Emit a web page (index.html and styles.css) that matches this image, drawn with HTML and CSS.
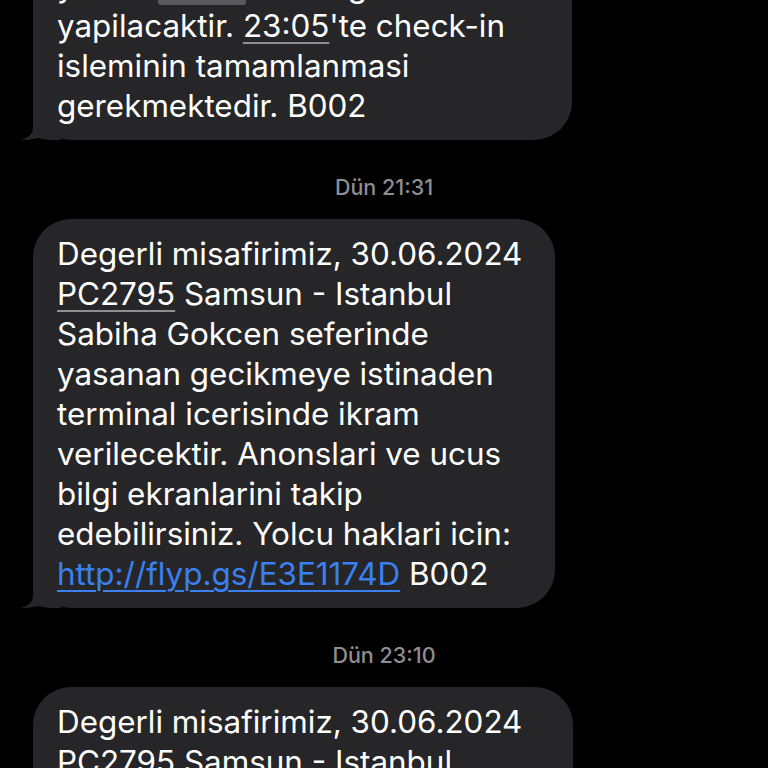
FILE: index.html
```html
<!DOCTYPE html>
<html lang="tr">
<head>
<meta charset="utf-8">
<title>Mesajlar</title>
<link rel="stylesheet" href="styles.css">
</head>
<body>
<div class="thread">
  <div class="msg w1">
    <div class="line">yerine <span class="hl">00:00</span> kalkis gate</div>
    <div class="line">yapilacaktir. <span class="dd">23:05</span>'te check-in</div>
    <div class="line">isleminin tamamlanmasi</div>
    <div class="line">gerekmektedir. B002</div>
    <svg class="tail" width="40" height="40" viewBox="0 0 40 40"><path d="M12 0 L12 27 Q12 37 0 39.5 Q6 40.5 18 38 Q24 40 34 40 L40 40 L40 0 Z" fill="#262628"/></svg>
  </div>
  <div class="stamp">Dün 21:31</div>
  <div class="msg w2">
    <div class="line">Degerli misafirimiz, 30.06.2024</div>
    <div class="line"><span class="dd">PC2795</span> Samsun - Istanbul</div>
    <div class="line">Sabiha Gokcen seferinde</div>
    <div class="line">yasanan gecikmeye istinaden</div>
    <div class="line">terminal icerisinde ikram</div>
    <div class="line">verilecektir. Anonslari ve ucus</div>
    <div class="line">bilgi ekranlarini takip</div>
    <div class="line">edebilirsiniz. Yolcu haklari icin:</div>
    <div class="line"><span class="link">http://flyp.gs/E3E1174D</span> B002</div>
    <svg class="tail" width="40" height="40" viewBox="0 0 40 40"><path d="M12 0 L12 27 Q12 37 0 39.5 Q6 40.5 18 38 Q24 40 34 40 L40 40 L40 0 Z" fill="#262628"/></svg>
  </div>
  <div class="stamp">Dün 23:10</div>
  <div class="msg w3">
    <div class="line">Degerli misafirimiz, 30.06.2024</div>
    <div class="line"><span class="dd">PC2795</span> Samsun - Istanbul</div>
    <div class="line">Sabiha Gokcen seferinde</div>
  </div>
</div>
</body>
</html>
```
FILE: styles.css
```css
html, body {
  margin: 0;
  padding: 0;
  background: #000;
}
body {
  width: 768px;
  height: 768px;
  overflow: hidden;
  font-family: "Inter", "Liberation Sans", sans-serif;
}
.thread {
  display: flex;
  flex-direction: column;
  align-items: flex-start;
  margin-top: -49px;
}
.msg {
  position: relative;
  z-index: 0;
  margin-left: 33px;
  box-sizing: border-box;
  background: #262628;
  border-radius: 38px;
  padding: 15px 24px 14px 24px;
  color: #fff;
  font-size: 31.4px;
  line-height: 40px;
  white-space: nowrap;
}
.w1 { width: 539px; }
.w2 { width: 522px; }
.w3 { width: 540px; }
.line { height: 40px; }
.hl {
  background: #5a5a5e;
  border-radius: 3px;
}
.dd {
  text-decoration: underline;
  text-decoration-color: #8e8e93;
  text-decoration-thickness: 2px;
  text-underline-offset: 5px;
}
.link {
  color: #3b80f0;
  text-decoration: underline;
  text-decoration-thickness: 2px;
  text-underline-offset: 5px;
}
.tail {
  position: absolute;
  z-index: -1;
  left: -12px;
  bottom: 0;
}
.stamp {
  align-self: center;
  padding: 37px 0 22px 0;
  height: 20px;
  line-height: 20px;
  font-size: 21.5px;
  font-weight: 500;
  color: #8e8e93;
}
```
